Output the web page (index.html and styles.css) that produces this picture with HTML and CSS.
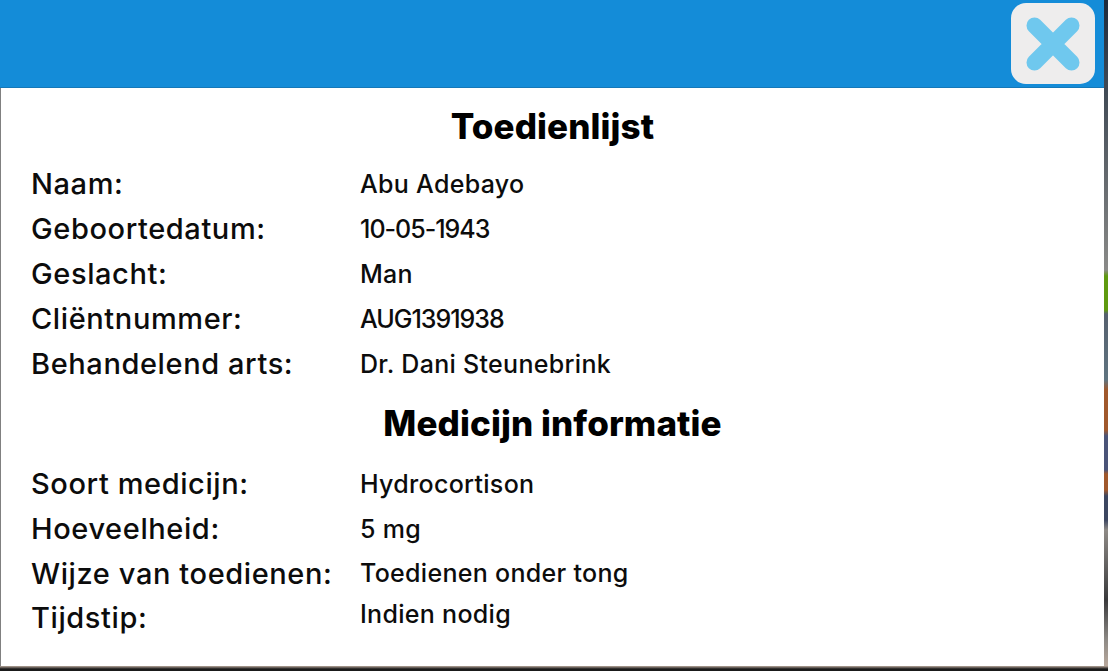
FILE: index.html
```html
<!DOCTYPE html>
<html lang="en">
<head>
    <meta charset="UTF-8">
    <meta name="viewport" content="width=device-width, initial-scale=1.0">
    <title>Toedienlijst</title>
    <link rel="stylesheet" href="styles.css">
</head>
<body>

    <div class="panel">
        <header class="panel-header">
            <button class="close-btn" aria-label="Sluiten">
                <svg width="54" height="54" viewBox="0 0 54 54">
                    <path d="M8.5 8.5 L45.5 45.5 M45.5 8.5 L8.5 45.5" stroke="#6fc8ee" stroke-width="16" stroke-linecap="round" fill="none"/>
                </svg>
            </button>
        </header>

        <div class="panel-body">
            <h1 class="title">Toedienlijst</h1>
            <div class="info-list">
                <div class="info-row"><span class="label">Naam:</span><span class="value">Abu Adebayo</span></div>
                <div class="info-row"><span class="label">Geboortedatum:</span><span class="value value-num">10-05-1943</span></div>
                <div class="info-row"><span class="label">Geslacht:</span><span class="value">Man</span></div>
                <div class="info-row"><span class="label">Cliëntnummer:</span><span class="value value-num">AUG1391938</span></div>
                <div class="info-row"><span class="label">Behandelend arts:</span><span class="value">Dr. Dani Steunebrink</span></div>
            </div>

            <h2 class="title title-second">Medicijn informatie</h2>
            <div class="info-list">
                <div class="info-row"><span class="label">Soort medicijn:</span><span class="value">Hydrocortison</span></div>
                <div class="info-row"><span class="label">Hoeveelheid:</span><span class="value">5 mg</span></div>
                <div class="info-row info-row-tight"><span class="label">Wijze van toedienen:</span><span class="value">Toedienen onder tong</span></div>
                <div class="info-row info-row-tight info-row-last"><span class="label">Tijdstip:</span><span class="value">Indien nodig</span></div>
            </div>
        </div>
    </div>

</body>
</html>
```

FILE: styles.css
```css
html, body {
    height: 100%;
}

body {
    margin: 0;
    font-family: 'Inter', 'Liberation Sans', sans-serif;
    color: #0c0c0c;
    overflow: hidden;
    /* blurred game scene showing round the panel */
    background: linear-gradient(to bottom,
        #1c2a3c 0, #8a8a88 270px, #5f9a10 276px, #5f9a10 310px,
        #56606e 314px, #5f7480 380px, #a0582c 390px, #a0582c 430px,
        #4a5478 436px, #4a5478 470px, #a0582c 474px, #a0582c 490px,
        #3c4660 496px, #3c4660 520px, #8e8a86 530px, #3a3a3c 600px,
        #8e8a86 640px, #b8a89c 666px, #1a1a1a 669px);
}

.panel {
    margin: 0 4px 0 0;
    height: 666px;
    display: flex;
    flex-direction: column;
}

.panel-header {
    height: 88px;
    flex-shrink: 0;
    box-sizing: border-box;
    padding: 3px 9px 0 0;
    background-color: #148cd8;
    border-bottom: 1px solid #1578b8;
    display: flex;
    justify-content: flex-end;
    align-items: flex-start;
}

.close-btn {
    width: 84px;
    height: 81px;
    padding: 0;
    border: none;
    border-radius: 15px;
    background-color: #eeeded;
    display: flex;
    align-items: center;
    justify-content: center;
}

.panel-body {
    flex-grow: 1;
    padding: 0 0 0 30px;
    background-color: #fff;
    border-left: 1px solid #808080;
}

.title {
    margin: 18px 30px 0 0;
    font-size: 35px;
    line-height: 40px;
    font-weight: 800;
    letter-spacing: 0.1px;
    text-align: center;
    color: #000;
}

.title-second {
    margin-top: 17px;
}

.info-list {
    margin-top: 15px;
}

.title-second + .info-list {
    margin-top: 18px;
}

.info-row {
    display: grid;
    grid-template-columns: 329px 1fr;
    height: 45px;
    align-items: center;
}

.info-row-tight {
    height: 44px;
}

.label {
    font-size: 29px;
    font-weight: 500;
    letter-spacing: 0.6px;
}

.value {
    font-size: 25px;
    font-weight: 500;
    letter-spacing: 0.3px;
}

.value-num {
    letter-spacing: -1px;
}

.info-row-last .value {
    margin-top: -6px;
}
```
